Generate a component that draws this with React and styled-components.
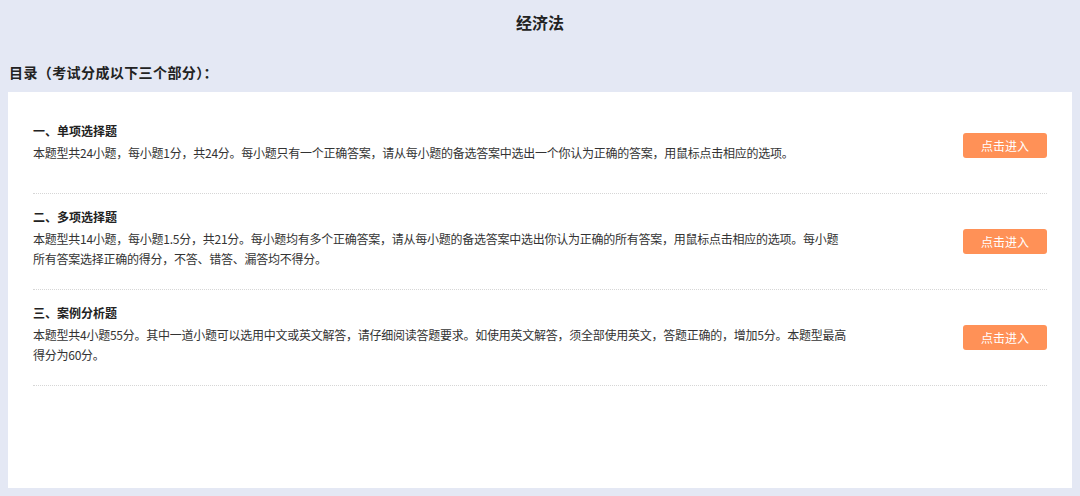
import React from "react";
import styled, { createGlobalStyle } from "styled-components";

const GlobalStyle = createGlobalStyle`
  html, body {
    margin: 0;
    padding: 0;
    background: #e4e8f4;
  }
  body {
    font-family: "Microsoft YaHei", "Noto Sans CJK SC", "Noto Sans", sans-serif;
    color: #333333;
  }
`;

const Page = styled.div`
  width: 1080px;
  height: 496px;
  box-sizing: border-box;
  padding: 0 8px 8px;
  display: flex;
  flex-direction: column;
`;

const Title = styled.h1`
  margin: 0;
  height: 44px;
  line-height: 44px;
  text-align: center;
  font-size: 16px;
  font-weight: bold;
  color: #222222;
`;

const Heading = styled.h2`
  margin: 0;
  padding-left: 1px;
  height: 48px;
  line-height: 56px;
  font-size: 14px;
  font-weight: bold;
  letter-spacing: 0.4px;
  color: #222222;
`;

const Panel = styled.div`
  flex: 1;
  background: #ffffff;
  padding: 6px 25px;
`;

const Row = styled.div`
  height: 95px;
  border-bottom: 1px dotted #d6d6d6;
  display: flex;
  align-items: center;
  justify-content: space-between;
`;

const Info = styled.div`
  display: flex;
  flex-direction: column;
  padding-bottom: 7px;
`;

const ItemTitle = styled.div`
  font-size: 12px;
  font-weight: bold;
  line-height: 20px;
  margin-bottom: 2px;
  color: #222222;
`;

const Desc = styled.div`
  width: 814px;
  font-size: 12px;
  line-height: 20px;
  letter-spacing: -0.25px;
  color: #333333;
`;

const EnterButton = styled.button`
  width: 84px;
  height: 25px;
  border: none;
  border-radius: 3px;
  background: #ff9157;
  color: #ffffff;
  font-family: inherit;
  font-size: 12px;
  cursor: pointer;
  padding: 0;
`;

const parts = [
  {
    title: "一、单项选择题",
    desc: "本题型共24小题，每小题1分，共24分。每小题只有一个正确答案，请从每小题的备选答案中选出一个你认为正确的答案，用鼠标点击相应的选项。",
  },
  {
    title: "二、多项选择题",
    desc: "本题型共14小题，每小题1.5分，共21分。每小题均有多个正确答案，请从每小题的备选答案中选出你认为正确的所有答案，用鼠标点击相应的选项。每小题所有答案选择正确的得分，不答、错答、漏答均不得分。",
  },
  {
    title: "三、案例分析题",
    desc: "本题型共4小题55分。其中一道小题可以选用中文或英文解答，请仔细阅读答题要求。如使用英文解答，须全部使用英文，答题正确的，增加5分。本题型最高得分为60分。",
  },
];

export default function App() {
  return (
    <>
      <GlobalStyle />
      <Page>
        <Title>经济法</Title>
        <Heading>目录（考试分成以下三个部分）：</Heading>
        <Panel>
          {parts.map((p) => (
            <Row key={p.title}>
              <Info>
                <ItemTitle>{p.title}</ItemTitle>
                <Desc>{p.desc}</Desc>
              </Info>
              <EnterButton>点击进入</EnterButton>
            </Row>
          ))}
        </Panel>
      </Page>
    </>
  );
}
